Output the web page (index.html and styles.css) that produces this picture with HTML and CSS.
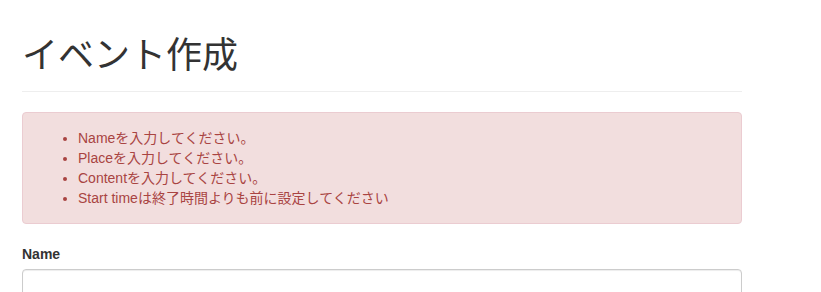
FILE: index.html
```html
<!DOCTYPE html>
<html lang="ja">
<head>
<meta charset="utf-8">
<title>イベント作成</title>
<link rel="stylesheet" href="styles.css">
</head>
<body>
<div class="container">
  <div class="page-header">
    <h1>イベント作成</h1>
  </div>
  <div class="alert alert-danger">
    <ul>
      <li>Nameを入力してください。</li>
      <li>Placeを入力してください。</li>
      <li>Contentを入力してください。</li>
      <li>Start timeは終了時間よりも前に設定してください</li>
    </ul>
  </div>
  <form class="event-form">
    <div class="form-group">
      <label for="name">Name</label>
      <input id="name" class="form-control" type="text">
    </div>
  </form>
</div>
</body>
</html>
```

FILE: styles.css
```css
* { box-sizing: border-box; }
html, body { margin: 0; padding: 0; }
body {
  font-family: "Liberation Sans", "Noto Sans CJK JP", sans-serif;
  font-size: 14px;
  line-height: 1.42857;
  color: #333;
  background: #fff;
}
.container {
  width: 742px;
  padding-left: 22px;
}
.page-header {
  padding-top: 32px;
  padding-bottom: 9px;
  border-bottom: 1px solid #eee;
  margin-bottom: 20px;
}
.page-header h1 {
  margin: 0 0 10px;
  font-size: 36px;
  line-height: 40px;
  font-weight: 400;
  color: #333;
  font-family: "Noto Sans CJK JP", sans-serif;
}
.alert {
  padding: 15px;
  border: 1px solid #ebccd1;
  border-radius: 4px;
  margin-bottom: 20px;
}
.alert-danger {
  background: #f2dede;
  color: #a94442;
}
.alert ul {
  margin: 0;
  padding-left: 40px;
  line-height: 20px;
}
.alert li { height: 20px; }
.form-group { margin-bottom: 15px; }
.form-group label {
  display: block;
  font-weight: 700;
  margin-bottom: 5px;
  line-height: 20px;
}
.form-control {
  display: block;
  width: 100%;
  height: 34px;
  padding: 6px 12px;
  font: inherit;
  color: #555;
  background: #fff;
  border: 1px solid #ccc;
  border-radius: 4px;
  box-shadow: inset 0 1px 1px rgba(0,0,0,.075);
}
```
